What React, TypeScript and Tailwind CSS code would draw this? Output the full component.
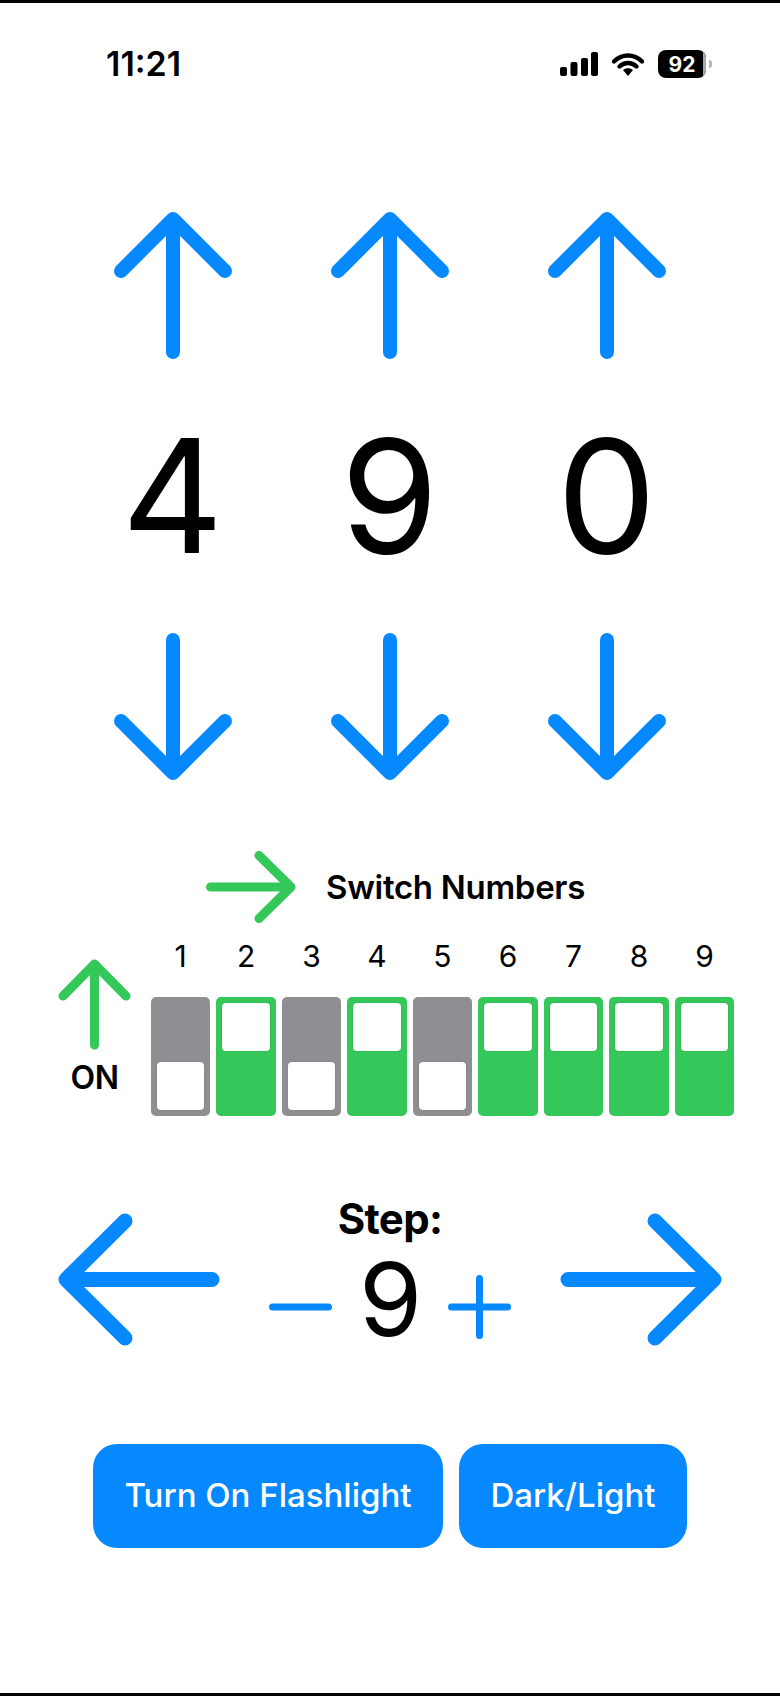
const BLUE = "#0688ff";
const GREEN = "#34c759";

const switches = [false, true, false, true, false, true, true, true, true];

function Arrow({ w, h, d, sw, color }: { w: number; h: number; d: string; sw: number; color: string }) {
  return (
    <svg width={w} height={h} viewBox={`0 0 ${w} ${h}`} fill="none" className="block shrink-0">
      <path d={d} stroke={color} strokeWidth={sw} strokeLinecap="round" strokeLinejoin="round" />
    </svg>
  );
}

function StatusBar() {
  return (
    <div className="flex h-[30px] items-center justify-between pl-[106px] pr-[68px]">
      <span className="text-[34px] font-semibold leading-none text-black">11:21</span>
      <div className="flex items-center">
        <svg width="38" height="24" viewBox="0 0 38 24" className="block">
          <rect x="0" y="15" width="7" height="9" rx="2" fill="#000" />
          <rect x="10.5" y="10" width="7" height="14" rx="2" fill="#000" />
          <rect x="21" y="6" width="7" height="18" rx="2" fill="#000" />
          <rect x="31" y="0" width="7" height="24" rx="2" fill="#000" />
        </svg>
        <svg width="32" height="24" viewBox="0 0 32 24" className="ml-[14px] block">
          <path d="M2 9.5 C10 1.5 22 1.5 30 9.5" fill="none" stroke="#000" strokeWidth="4.4" strokeLinecap="round" />
          <path d="M7.5 14.5 C12.5 9.8 19.5 9.8 24.5 14.5" fill="none" stroke="#000" strokeWidth="4.4" strokeLinecap="round" />
          <path d="M11 18 C14 15.6 18 15.6 21 18 L16 24 Z" fill="#000" />
        </svg>
        <div className="relative ml-[14px] flex h-[28px] w-[48px] items-center justify-center overflow-hidden rounded-[8px] bg-black">
          <span className="text-[21px] font-bold leading-none text-white">92</span>
          <div className="absolute inset-y-0 right-0 w-[3px] bg-[#a8a8a8]" />
        </div>
        <div className="ml-[3px] h-[8px] w-[3px] rounded-r-full bg-[#b5b5b5]" />
      </div>
    </div>
  );
}

function Counter() {
  return (
    <div className="mt-[133px] grid w-[651px] grid-cols-3 self-start ml-[64px] justify-items-center">
      {[0, 1, 2].map((i) => (
        <Arrow key={i} w={118} h={147} sw={14} color={BLUE} d="M7 59 L59 7 L111 59 M59 140 V7" />
      ))}
      {["4", "9", "0"].map((n) => (
        <div key={n} className="mb-[58px] mt-[58px] h-[158px] text-[158px] font-normal leading-[158px] text-black">
          {n}
        </div>
      ))}
      {[0, 1, 2].map((i) => (
        <Arrow key={i} w={118} h={147} sw={14} color={BLUE} d="M7 88 L59 140 L111 88 M59 7 V140" />
      ))}
    </div>
  );
}

function Toggle({ on }: { on: boolean }) {
  return (
    <div
      className={`flex h-[119px] flex-col rounded-[5px] px-[6px] py-[6px] ${
        on ? "justify-start bg-[#34c759]" : "justify-end bg-[#8e8e93]"
      }`}
    >
      <div className="h-[48px] rounded-[4px] bg-white shadow-[0_0_2px_rgba(0,0,0,0.15)]" />
    </div>
  );
}

function SwitchPanel() {
  return (
    <div className="mt-[71px]">
      <div className="ml-[206px] flex h-[72px] items-center">
        <Arrow w={90} h={72} sw={9} color={GREEN} d="M4.5 36 H85 M53 4.5 L85 36 L53 67.5" />
        <span className="ml-[30px] text-[33px] font-semibold leading-none tracking-[-0.3px] text-black">
          Switch Numbers
        </span>
      </div>
      <div className="mt-[11px] flex pl-[58px]">
        <div className="mt-[25px] flex w-[93px] flex-col">
          <div className="w-[73px]">
            <Arrow w={73} h={91} sw={9} color={GREEN} d="M5 37 L36.5 5 L68 37 M36.5 86 V5" />
          </div>
          <div className="mt-[12px] w-[73px] text-center text-[32px] font-semibold leading-[32px] tracking-[-0.5px] text-black">
            ON
          </div>
        </div>
        <div className="w-[583px]">
          <div className="grid grid-cols-9 gap-x-[6.4px]">
            {switches.map((_, i) => (
              <div key={i} className="h-[44px] text-center text-[30px] leading-[44px] text-black">
                {i + 1}
              </div>
            ))}
          </div>
          <div className="mt-[19px] grid grid-cols-9 gap-x-[6.4px]">
            {switches.map((on, i) => (
              <Toggle key={i} on={on} />
            ))}
          </div>
        </div>
      </div>
    </div>
  );
}

function StepControl() {
  return (
    <div className="mt-[82px] flex pl-[58px]">
      <div className="mt-[15px]">
        <Arrow w={162} h={133} sw={15} color={BLUE} d="M154 66.5 H8 M67 8 L8 66.5 L67 125" />
      </div>
      <div className="-mt-[5px] flex w-[340px] flex-col items-center">
        <div className="h-[52px] text-[42px] font-bold leading-[52px] tracking-[-0.7px] text-black">Step:</div>
        <div className="mt-[6px] flex w-full items-center justify-start pl-[49px]">
          <svg width="63" height="8" viewBox="0 0 63 8" className="mt-[16px] block">
            <path d="M3.5 4 H59.5" stroke={BLUE} strokeWidth="7" strokeLinecap="round" />
          </svg>
          <div className="ml-[27px] mr-[34px] h-[96px] w-[55px] text-center text-[102px] leading-[96px] text-black">9</div>
          <svg width="63" height="64" viewBox="0 0 63 64" className="mt-[16px] block">
            <path d="M3.5 32 H59.5 M31.5 3.5 V60.5" stroke={BLUE} strokeWidth="7" strokeLinecap="round" />
          </svg>
        </div>
      </div>
      <div className="mt-[15px]">
        <Arrow w={162} h={133} sw={15} color={BLUE} d="M8 66.5 H154 M95 8 L154 66.5 L95 125" />
      </div>
    </div>
  );
}

function Buttons() {
  return (
    <div className="mt-[97px] flex gap-[16px] pl-[93px]">
      <button className="h-[104px] w-[350px] rounded-[24px] bg-[#0688ff] text-[33px] font-medium text-white">
        Turn On Flashlight
      </button>
      <button className="h-[104px] w-[228px] rounded-[24px] bg-[#0688ff] text-[33px] font-medium text-white">
        Dark/Light
      </button>
    </div>
  );
}

export default function App() {
  return (
    <div className="flex h-[1696px] w-[780px] flex-col border-y-[3px] border-black bg-white pt-[46px] font-['Inter',sans-serif]">
      <StatusBar />
      <Counter />
      <SwitchPanel />
      <StepControl />
      <Buttons />
    </div>
  );
}
